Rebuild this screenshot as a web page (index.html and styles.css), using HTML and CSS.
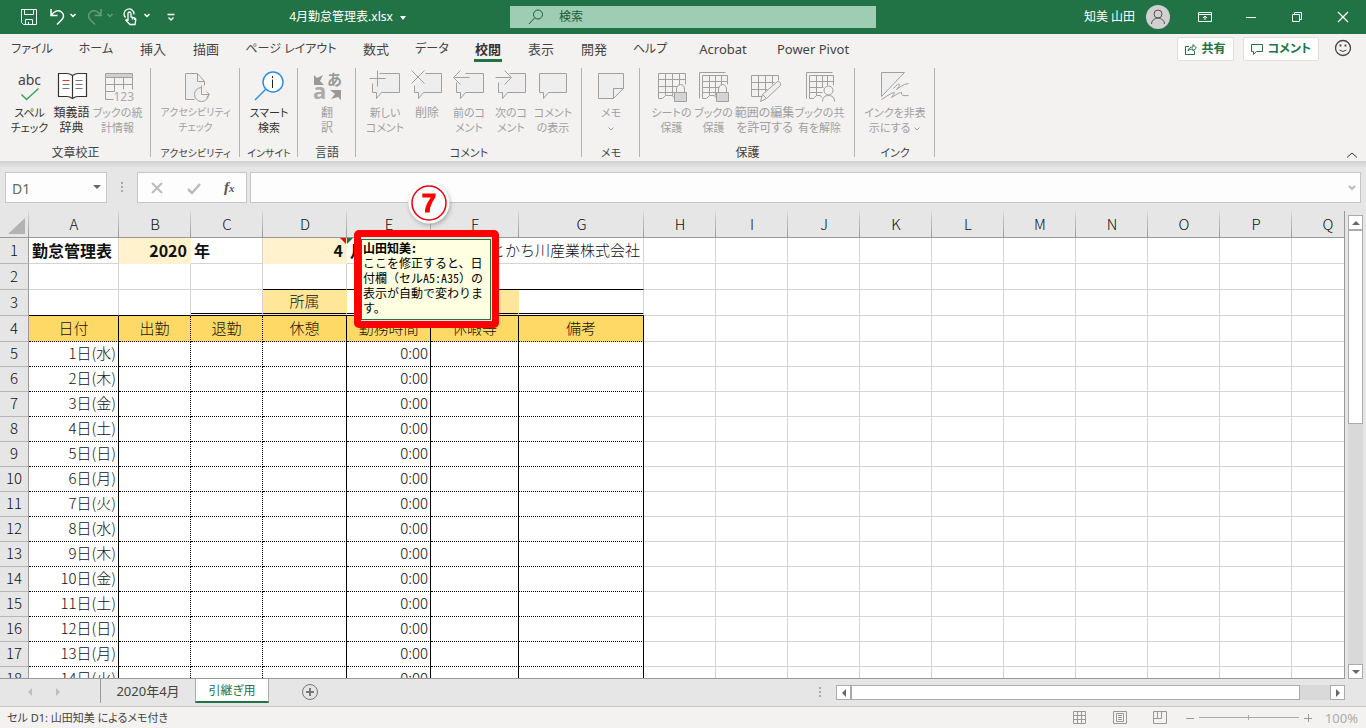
FILE: index.html
```html
<!DOCTYPE html>
<html lang="ja">
<head>
    <meta charset="UTF-8">
    <meta name="viewport" content="width=device-width, initial-scale=1.0">
    <title>4月勤怠管理表.xlsx</title>
    <link rel="stylesheet" href="styles.css">
</head>
<body>
    <header class="titlebar">
        <div class="title-left">
            <div class="qat">
                <button aria-label="上書き保存"><svg width="18" height="18" viewBox="0 0 18 18"><path d="M1.5 1.5h15v15h-13l-2-2zM4.500 1.500v5h9v-5M5.500 16.500v-5h7v5M8.500 16v-2"/></svg></button>
                <button aria-label="元に戻す"><svg width="28" height="18" viewBox="0 0 28 18"><path d="M2 1v6.500h6.500M2 7.500C5 3 9 1.500 12.500 4c3.500 3 2 6-.5 8.500l-4 4" stroke-width="1.500"/><path d="M21.500 6l2.500 2.500L26.500 6" stroke-width="1.500"/></svg></button>
                <button aria-label="やり直し" class="dim"><svg width="28" height="18" viewBox="0 0 28 18"><path d="M15 1v6.500H8.500M15 7.500C12 3 8 1.500 4.500 4c-3.500 3-2 6 .5 8.500l4 4" stroke-width="1.500"/><path d="M21.500 6L24 8.500 26.500 6" stroke-width="1.500"/></svg></button>
                <button aria-label="タッチ/マウス"><svg width="28" height="18" viewBox="0 0 28 18"><path d="M2.500 9.500A5 5 0 1 1 11 6.500M5 13V5.500a1.500 1.500 0 0 1 3 0V9l3.500.800q1.500.300 1.300 2l-.800 4.700H7L3 12.500q-.500-1.500 2 0M9.500 9v2.500M11.500 10v2" stroke-width="1.300"/><path d="M21.500 6L24 8.500 26.500 6" stroke-width="1.500"/></svg></button>
                <button class="customize" aria-label="クイック アクセス ツール バーのユーザー設定"><svg width="10" height="18" viewBox="0 0 10 18"><path d="M1.500 6.500h7M2.500 9.500L5 12l2.500-2.500" stroke-width="1.300"/></svg></button>
            </div>
            <button class="doc-title">4月勤怠管理表.xlsx <span class="caret"></span></button>
        </div>
        <label class="search">
            <svg width="16" height="16" viewBox="0 0 16 16"><circle cx="10" cy="5.500" r="4.500"/><path d="M6.500 9L1 15"/></svg>
            <input type="text" placeholder="検索" aria-label="検索">
        </label>
        <div class="title-right">
            <span class="user">知美 山田</span>
            <svg class="avatar" width="24" height="24" viewBox="0 0 24 24"><circle cx="12" cy="12" r="12" fill="#d0d0d0" stroke="none"/><circle cx="12" cy="9" r="4"/><path d="M5.500 19a6.500 6 0 0 1 13 0"/></svg>
            <button class="win" aria-label="リボンの表示オプション"><svg width="14" height="12" viewBox="0 0 14 12"><path d="M.5 1.500h13v9H.5zM.5 3.500h13M7 9V5M5 7l2-2 2 2"/></svg></button>
            <button class="win" aria-label="最小化"><svg width="12" height="12" viewBox="0 0 12 12"><path d="M1 6.500h10"/></svg></button>
            <button class="win" aria-label="元に戻す"><svg width="12" height="12" viewBox="0 0 12 12"><path d="M1.500 3.500h7v7h-7zM3.500 3.500v-2h7v7h-2"/></svg></button>
            <button class="win" aria-label="閉じる"><svg width="12" height="12" viewBox="0 0 12 12"><path d="M1 1l10 10M11 1L1 11" stroke-width="1.300"/></svg></button>
        </div>
    </header>

    <nav class="tabs">
        <button class="w64 kana">ファイル</button>
        <button class="w64 kana">ホーム</button>
        <button class="w50">挿入</button>
        <button class="w56">描画</button>
        <button class="w114 kana">ページ レイアウト</button>
        <button class="w56">数式</button>
        <button class="w56 kana">データ</button>
        <button class="w56 active">校閲</button>
        <button class="w50">表示</button>
        <button class="w56">開発</button>
        <button class="w56 kana">ヘルプ</button>
        <button class="w90">Acrobat</button>
        <button class="w90">Power Pivot</button>
        <div class="tab-actions">
            <button class="pill"><svg width="12" height="12" viewBox="0 0 12 12"><path d="M4 3.500H.5v8h9V8M3 8c.500-3 2.500-4 5-4V1.500L11.500 5 8 8V6C6 6 4 6.500 3 8z"/></svg>共有</button>
            <button class="pill"><svg width="12" height="12" viewBox="0 0 12 12"><path d="M.5 1.500h11v7h-6l-3 3v-3h-2z"/></svg>コメント</button>
            <button class="smile" aria-label="フィードバック"><svg width="18" height="18" viewBox="0 0 18 18"><circle cx="9" cy="9" r="7.500" stroke-width="1.300"/><path d="M6.500 5.500v2M11.500 5.500v2" stroke-width="1.800"/><path d="M5.500 11q3.500 3 7 0"/></svg></button>
        </div>
    </nav>

    <section class="ribbon">
        <div class="group g151">
            <div class="tools">
                <button class="w42 kana"><svg width="32" height="32" viewBox="-.5 -.5 32 32"><text x="15" y="14" text-anchor="middle" class="abc">abc</text><path d="M7 24l5 5L24 18" stroke="#3fa55c" stroke-width="1.500"/></svg>スペル<br>チェック</button>
                <button class="w42"><svg width="32" height="32" viewBox="-.5 -.5 32 32"><path d="M16 5q-3-2-5.500-2H2v23h8.500q3 0 5.500 2 2.500-2 5.500-2H30V3h-8.500Q19 3 16 5zM16 5v22" fill="#fff" stroke-width="1.200"/><path d="M6 10h7" stroke="#e33"/><path d="M6 14h7M6 18h7M19 10h7M19 14h7M19 18h7" stroke="#777"/></svg>類義語<br>辞典</button>
                <button class="w50 kana" disabled><svg width="32" height="32" viewBox="-.5 -.5 32 32"><path d="M3 3h27v4H3z" fill="#d0d0d0"/><path d="M3 7v22h8M30 7v12M3 14h27M3 21h9M12 7v14M21 7v12"/><text x="11" y="30" class="num">123</text></svg>ブックの統<br>計情報</button>
            </div>
            <div class="caption">文章校正</div>
        </div>
        <div class="group g89">
            <div class="tools">
                <button class="w72 narrow" disabled><svg width="32" height="32" viewBox="-.5 -.5 32 32"><path d="M14 29H5V3h12l7 8v4M17 3v8h7" fill="#eee"/><path d="M21 17a7 7 0 1 0 7 7M21 15v9h8M26 21l3 3-3 3"/></svg>アクセシビリティ<br>チェック</button>
            </div>
            <div class="caption narrow">アクセシビリティ</div>
        </div>
        <div class="group g58">
            <div class="tools">
                <button class="w50 kana"><svg width="32" height="32" viewBox="0 0 32 32"><circle cx="20" cy="12" r="10" fill="#fff" stroke="#2d8fdd" stroke-width="1.500"/><path d="M12.500 19.500L2 30" stroke="#2d8fdd" stroke-width="1.500"/><path d="M19.500 9.500V18M19.500 6v2" stroke="#222"/></svg>スマート<br>検索</button>
            </div>
            <div class="caption narrow">インサイト</div>
        </div>
        <div class="group g58">
            <div class="tools">
                <button class="w50" disabled><svg width="32" height="32" viewBox="0 0 32 32"><path d="M3 5l3 3 6-3-3 6 4 4H3z" fill="#999" stroke="none"/><path d="M30 30l-3-3-7 2 4-5-5-4h11z" fill="#999" stroke="none"/><text x="2" y="29" class="glyph">a</text><text x="16" y="15" class="hira">あ</text></svg>翻<br>訳</button>
            </div>
            <div class="caption">言語</div>
        </div>
        <div class="group g226">
            <div class="tools">
                <button class="w42 kana" disabled><svg width="32" height="32" viewBox="-.5 -.5 32 32"><path d="M10 3h20v19H12l-5 6v-6H3v-9" fill="#eee"/><path d="M8 0v16M0 8h16"/></svg>新しい<br>コメント</button>
                <button class="w42" disabled><svg width="32" height="32" viewBox="-.5 -.5 32 32"><path d="M14 3h16v19H12l-5 6v-6H3v-7" fill="#eee"/><path d="M0 0l13 13M13 0L0 13"/></svg>削除</button>
                <button class="w42 kana" disabled><svg width="32" height="32" viewBox="-.5 -.5 32 32"><path d="M12 3h18v19H12l-5 6v-6H3V12" fill="#eee"/><path d="M16 7H1M7 0L0 7l7 7"/></svg>前のコ<br>メント</button>
                <button class="w42 kana" disabled><svg width="32" height="32" viewBox="-.5 -.5 32 32"><path d="M14 3h16v19H12l-5 6v-6H3V12" fill="#eee"/><path d="M0 7h15M9 0l7 7-7 7"/></svg>次のコ<br>メント</button>
                <button class="w42 kana" disabled><svg width="32" height="32" viewBox="-.5 -.5 32 32"><path d="M2 3h27v19H11l-5 6v-6H2z" fill="#eee"/></svg>コメント<br>の表示</button>
            </div>
            <div class="caption kana">コメント</div>
        </div>
        <div class="group g58">
            <div class="tools">
                <button class="w50 kana" disabled><svg width="32" height="32" viewBox="-.5 -.5 32 32"><path d="M3 3h25v15L18 28H3zM18 28V18h10" fill="#eee"/></svg>メモ<br><svg class="chev" width="8" height="6" viewBox="0 0 8 6"><path d="M1.500 1.500L4 4l2.500-2.500"/></svg></button>
            </div>
            <div class="caption kana">メモ</div>
        </div>
        <div class="group g215">
            <div class="tools">
                <button class="w42 kana" disabled><svg width="32" height="32" viewBox="-.5 -.5 32 32"><path d="M17 27l-1-2H9l-3 3H2V3h27v11M2 9h27M2 16h19M2 22h16M9 3v22M16 3v22M23 3v12"/><path d="M20 22v-3.500a4 4.500 0 0 1 8 0V22"/><path d="M18 22h12v9H18z" fill="#d4d4d4"/></svg>シートの<br>保護</button>
                <button class="w42 kana" disabled><svg width="32" height="32" viewBox="-.5 -.5 32 32"><path d="M1 28V2h26M17 27l-1-2h-5l-3 3H4V5h25v9M4 11h25M4 17h17M4 22h14M11 5v20M17 5v20M23 5v10"/><path d="M20 22v-3.500a4 4.500 0 0 1 8 0V22"/><path d="M18 22h12v9H18z" fill="#d4d4d4"/></svg>ブックの<br>保護</button>
                <button class="w60" disabled><svg width="32" height="32" viewBox="-.5 -.5 32 32"><path d="M13 26H2V5h27v5M2 12h23M2 19h16M9 5v21M16 5v16M23 5v9"/><path d="M11 31l2-7 15-13q4 0 3 4L17 28zM13 24l4 4" fill="#eee"/></svg>範囲の編集<br>を許可する</button>
                <button class="w50 kana" disabled><svg width="32" height="32" viewBox="-.5 -.5 32 32"><path d="M2 28V2h26M17 27l-1-2h-4l-3 3H5V5h24v10M5 11h24M5 17h14M5 22h13M12 5v20M18 5v12M23 5v10"/><circle cx="24" cy="20" r="4.500" fill="#f3f2f1"/><path d="M18 31q0-6 6-6t6 6" fill="#f3f2f1"/></svg>ブックの共<br>有を解除</button>
            </div>
            <div class="caption">保護</div>
        </div>
        <div class="group g80">
            <div class="tools">
                <button class="w64 kana" disabled><svg width="32" height="32" viewBox="-.5 -.5 32 32"><path d="M2 26V2h23z" fill="#eee"/><path d="M14 18q5-6 6-4 0 2-3 5 4-3 8-5l4-1M2 29Q14 21 15 22q0 1-3 5 9-6 10-5-1 4 7 3"/></svg>インクを非表<br>示にする <svg class="chev" width="8" height="6" viewBox="0 0 8 6"><path d="M1.500 1.500L4 4l2.500-2.500"/></svg></button>
            </div>
            <div class="caption kana">インク</div>
        </div>
        <button class="collapse" aria-label="リボンを折りたたむ"><svg width="12" height="8" viewBox="0 0 12 8"><path d="M1 6.500L6 2l5 4.500"/></svg></button>
    </section>

    <section class="formula-bar">
        <div class="name-box"><input type="text" value="D1" aria-label="名前ボックス"><span class="caret"></span></div>
        <span class="dots"></span>
        <div class="fx-box">
            <button aria-label="キャンセル"><svg width="14" height="14" viewBox="0 0 14 14"><path d="M2 2l10 10M12 2L2 12"/></svg></button>
            <button aria-label="入力"><svg width="14" height="14" viewBox="0 0 14 14"><path d="M1 8l4 4L13 3" stroke-width="2.500"/></svg></button>
            <button class="fx" aria-label="関数の挿入">f<sub>x</sub></button>
        </div>
        <div class="formula"><input type="text" aria-label="数式バー"><svg width="8" height="8" viewBox="0 0 8 8"><path d="M1 2l3 3 3-3" stroke-width="2"/></svg></div>
    </section>

    <main class="workspace">
        <div class="sheet">
            <table>
                <colgroup id="cols"></colgroup>
                <thead><tr id="letters"></tr></thead>
                <tbody id="rows"></tbody>
            </table>
        </div>
        <div class="vscroll">
            <button class="step" aria-label="上へ"><span class="tri up"></span></button>
            <div class="vthumb"></div>
            <button class="step end" aria-label="下へ"><span class="tri down"></span></button>
        </div>

        <div class="memo-frame">
            <div class="memo"><b>山田知美<span class="half">:</span></b><br>ここを修正すると、日<br>付欄（セル<span class="half">A5:A35</span>）の<br>表示が自動で変わりま<br>す。</div>
        </div>
        <svg class="step-badge" width="46" height="46" viewBox="0 0 46 46">
            <circle cx="23" cy="23" r="20.500" fill="#fff" stroke="none"/>
            <circle cx="23" cy="23" r="17" fill="none" stroke="#e60012" stroke-width="1.500"/>
            <text x="23" y="32" text-anchor="middle">7</text>
        </svg>
    </main>

    <section class="sheet-tabs">
        <button class="nav" aria-label="前のシート"><span class="tri left"></span></button>
        <button class="nav" aria-label="次のシート"><span class="tri right"></span></button>
        <button class="sheet-tab">2020年4月</button>
        <button class="sheet-tab current">引継ぎ用</button>
        <button class="add" aria-label="新しいシート"><svg width="18" height="18" viewBox="0 0 18 18"><circle cx="9" cy="9" r="7.500"/><path d="M9 5v8M5 9h8" stroke-width="2"/></svg></button>
        <span class="dots"></span>
        <div class="hscroll">
            <button class="step" aria-label="左へ"><span class="tri left"></span></button>
            <div class="hthumb"></div>
            <button class="step end" aria-label="右へ"><span class="tri right"></span></button>
        </div>
    </section>

    <footer class="status">
        <span class="message">セル D1: 山田知美 によるメモ付き</span>
        <div class="views">
            <button aria-label="標準"><svg width="14" height="14" viewBox="0 0 14 14"><path d="M.5.5h12v12H.5zM.5 4.500h12M.5 8.500h12M4.500.5v12M8.500.5v12"/></svg></button>
            <button aria-label="ページ レイアウト"><svg width="14" height="14" viewBox="0 0 14 14"><path d="M.5.5h13v12H.5zM3.500 2.500h7v8h-7zM5 4.500h4M5 6.500h4M5 8.500h4"/></svg></button>
            <button aria-label="改ページ プレビュー"><svg width="14" height="14" viewBox="0 0 14 14"><path d="M.5.5h13v12H.5zM.5 7.500h8v-7M4.500.5v7"/></svg></button>
            <div class="zoom">
                <button aria-label="縮小"><svg width="10" height="10" viewBox="0 0 10 10"><path d="M1 5.500h8"/></svg></button>
                <span class="rail"></span>
                <button aria-label="拡大"><svg width="10" height="10" viewBox="0 0 10 10"><path d="M1 5.500h8M5.500 1v8"/></svg></button>
            </div>
            <span class="percent">100%</span>
        </div>
    </footer>

    <script src="script.js"></script>
</body>
</html>
```

FILE: styles.css
```css
* {
    box-sizing: border-box;
}
body {
    margin: 0;
    height: 100vh;
    display: flex;
    flex-direction: column;
    overflow: hidden;
    background: #e6e6e6;
    color: #333;
    font-family: "Noto Sans", "Noto Sans CJK JP", sans-serif;
    font-size: 12px;
    line-height: 16px;
    font-feature-settings: "palt";
}
button, input {
    font: inherit;
    font-feature-settings: inherit;
    color: inherit;
    background: none;
    border: none;
    padding: 0;
    margin: 0;
    min-width: 0;
    outline: none;
}
svg {
    fill: none;
    stroke: currentColor;
    flex: none;
    overflow: visible;
}
.caret {
    display: inline-block;
    border: 3px solid transparent;
    border-top: 4px solid currentColor;
    border-bottom: none;
    vertical-align: middle;
}
.dots {
    flex: none;
    width: 2px;
    height: 11px;
    background: repeating-linear-gradient(#aaa 0 2px, transparent 2px 4px);
}

/* title bar */
.titlebar {
    flex: none;
    height: 34px;
    display: flex;
    background: #217346;
    color: #fff;
}
.title-left, .title-right {
    flex: 1 1 0;
    display: flex;
    align-items: center;
}
.title-left {
    justify-content: space-between;
}
.qat {
    display: flex;
    gap: 9px;
    margin-left: 20px;
}
.qat button {
    display: flex;
}
.qat button:first-child {
    margin-right: 2px;
}
.qat .customize {
    margin-left: 6px;
}
.dim {
    opacity: .3;
}
.doc-title {
    margin-right: 84px;
}
.doc-title .caret {
    margin-left: 4px;
}
.search {
    width: 366px;
    height: 22px;
    margin: 6px 0 6px 20px;
    padding-left: 18px;
    display: flex;
    align-items: center;
    gap: 15px;
    background: #9fcdb3;
    color: #185c37;
}
.search input::placeholder {
    color: #185c37;
    opacity: 1;
}
.title-right {
    justify-content: flex-end;
}
.avatar {
    margin: 0 12px 0 11px;
    color: #555;
}
.win {
    width: 46px;
    height: 34px;
    display: flex;
    align-items: center;
    justify-content: center;
}

/* ribbon tabs */
.tabs {
    flex: none;
    height: 32px;
    display: flex;
    background: #f3f2f1;
    color: #444;
    font-size: 13px;
}
.tabs > button {
    position: relative;
    height: 30px;
    white-space: nowrap;
}
.tabs .kana {
    font-size: 12px;
}
.tabs .active {
    font-weight: bold;
    color: #333;
}
.tabs .active::after {
    content: "";
    position: absolute;
    left: 14px;
    right: 14px;
    bottom: 2px;
    height: 3px;
    background: #217346;
}
.tab-actions {
    margin-left: auto;
    padding: 3px 14px 0 0;
    display: flex;
    align-items: flex-start;
    gap: 9px;
}
.pill {
    height: 24px;
    padding: 0 7px;
    display: flex;
    align-items: center;
    gap: 5px;
    background: #fff;
    border: 1px solid #e1dfdd;
    border-radius: 2px;
    color: #217346;
    font-size: 12px;
    font-weight: bold;
}
.smile {
    width: 18px;
    height: 22px;
    margin-left: 6px;
    display: flex;
    align-items: center;
}
.w42 { width: 42px; }
.w50 { width: 50px; }
.w56 { width: 56px; }
.w60 { width: 60px; }
.w64 { width: 64px; }
.w72 { width: 72px; }
.w90 { width: 90px; }
.w114 { width: 114px; }

/* ribbon */
.ribbon {
    flex: none;
    height: 95px;
    display: flex;
    background: #f3f2f1;
    position: relative;
}
.group {
    height: 93px;
    margin-top: 2px;
    display: flex;
    flex-direction: column;
    align-items: center;
    justify-content: space-between;
    position: relative;
}
.group::after {
    content: "";
    position: absolute;
    right: 0;
    top: 0;
    height: 89px;
    border-right: 1px solid #b3b3b3;
}
.g58 { width: 58px; }
.g80 { width: 80px; }
.g89 { width: 89px; }
.g151 { width: 151px; }
.g215 { width: 215px; }
.g226 { width: 226px; }
.tools {
    display: flex;
    align-items: flex-start;
}
.tools button {
    display: flow-root;
    padding-top: 2px;
    line-height: 15px;
    white-space: nowrap;
    text-align: center;
}
.tools button > svg:first-child {
    display: block;
    margin: 0 auto 3px;
}
.tools button:disabled {
    color: #a0a0a0;
}
.caption {
    color: #444;
    white-space: nowrap;
    line-height: 16px;
}
/* kana runs wide at full size */
.ribbon .kana {
    font-size: 11px;
}
.ribbon .narrow {
    font-size: 10px;
}
.abc {
    font-size: 14px;
    fill: #444;
    stroke: none;
}
.num {
    font-size: 12px;
    fill: #aaa;
    stroke: none;
}
.glyph {
    font-size: 22px;
    font-weight: bold;
    fill: #aaa;
    stroke: none;
}
.hira {
    font-size: 15px;
    font-weight: bold;
    fill: #999;
    stroke: none;
}
.collapse {
    margin: auto 8px 2px auto;
    display: flex;
}

/* formula bar */
.formula-bar {
    flex: none;
    height: 50px;
    padding: 11px 5px 8px;
    display: flex;
    background: linear-gradient(#cfcfcf, #e6e6e6 7px);
}
.name-box, .fx-box, .formula {
    display: flex;
    align-items: center;
    background: #fdfdfd;
    border: 1px solid #c6c6c6;
}
.name-box {
    width: 102px;
    padding: 3px 5px 0 6px;
    color: #666;
    font-size: 14px;
}
.name-box input {
    flex: 1;
}
.name-box .caret {
    border-width: 4px 4px 0;
    margin-bottom: 4px;
}
.formula-bar .dots {
    margin: 10px 14px 0;
}
.fx-box {
    width: 110px;
    justify-content: space-around;
    color: #bbb;
    margin-right: 3px;
}
.fx-box button {
    display: flex;
}
.fx-box svg {
    stroke-width: 2;
}
.fx-box .fx {
    color: #555;
    font: italic bold 15px/18px "Liberation Serif", serif;
}
.fx sub {
    font-size: 11px;
    line-height: 20px;
}
.formula {
    flex: 1;
    padding: 0 4px;
    color: #bbb;
}
.formula input {
    flex: 1;
}

/* sheet */
.workspace {
    flex: 1;
    min-height: 0;
    display: flex;
    position: relative;
}
.sheet {
    flex: 1;
    min-width: 0;
    overflow: hidden;
    border-right: 1px solid #999;
    border-bottom: 1px solid #999;
}
table {
    width: 1364px;
    table-layout: fixed;
    border-collapse: separate;
    border-spacing: 0;
    background: #fff;
    color: #111;
    font-family: "Noto Sans CJK JP", sans-serif;
    font-feature-settings: normal;
    font-size: 15px;
    font-weight: 300;
    line-height: 20px;
}
th, td {
    height: 25px;
    padding: 0 2px 2px;
    border-right: 1px solid #d4d4d4;
    border-bottom: 1px solid #d4d4d4;
    text-align: center;
    white-space: nowrap;
    font-weight: inherit;
}
thead th {
    height: 27px;
    padding-bottom: 0;
    background: linear-gradient(#d8d8d8, #999) right / 1px 100% no-repeat #e6e6e6;
    border-right: none;
    border-bottom-color: #999;
}
tbody th {
    background: #e6e6e6;
    border-right-color: #999;
    border-bottom-color: #b5b5b5;
}
.corner {
    padding: 0;
}
.corner::after {
    content: "";
    display: block;
    width: 0;
    margin: 4px 0 0 8px;
    border-left: 17px solid transparent;
    border-bottom: 16px solid #b3b3b3;
}
.tall th, .tall td {
    height: 26px;
}
.title-row td {
    position: relative;
    font-size: 16px;
    font-weight: bold;
    text-align: left;
    padding: 0 3px 2px;
}
.title-row .value {
    text-align: right;
    background: #fff2cc;
    border-right-color: #fff2cc;
    border-bottom-color: #fff2cc;
}
.title-row .company {
    text-align: right;
    font-size: 15px;
    font-weight: 300;
}
/* corner marks: red for a memo, green for a cell warning */
.noted::after, .warned::before {
    content: "";
    position: absolute;
    top: 0;
    border-top: 6px solid #f00;
}
.noted::after {
    right: 0;
    border-left: 6px solid transparent;
}
.warned::before {
    left: 0;
    border-top-color: #217346;
    border-right: 6px solid transparent;
}
.line {
    border-bottom-color: #000;
}
.double {
    border-bottom: 3px double #000;
}
.label {
    background: #ffe699;
    border-right-color: #ffe699;
}
.head {
    background: #ffd966;
}
.body {
    border-right: 1px solid #000;
    border-bottom: 1px dotted #000;
}
.thin {
    border-right-style: dotted;
}
td.right {
    text-align: right;
}

.memo-frame {
    position: absolute;
    left: 354px;
    top: 19px;
    width: 145px;
    height: 98px;
    padding: 2px 1px 1px 0;
    border: 7px solid #f00;
    border-radius: 5px;
    background: #e6e6e6;
}
.memo {
    height: 100%;
    padding: 0 2px 0 1px;
    background: #ffffe1;
    border: 1px solid #217346;
    color: #000;
    font-family: "Noto Sans CJK JP", sans-serif;
    font-feature-settings: normal;
    font-size: 12px;
    line-height: 15px;
    white-space: nowrap;
}
.half {
    font-feature-settings: "hwid";
}
.step-badge {
    position: absolute;
    left: 406px;
    top: -31px;
    filter: drop-shadow(1px 2px 2px rgba(0,0,0,.25));
}
.step-badge text {
    font-family: "Liberation Sans", sans-serif;
    font-size: 26px;
    font-weight: bold;
    fill: #f00;
    stroke: #f00;
}

/* scroll bars */
.vscroll {
    flex: none;
    width: 21px;
    padding: 4px 3px 0;
    display: flex;
    flex-direction: column;
    background: linear-gradient(#d9d9d9, #d9d9d9) 3px 4px / 15px 100% no-repeat;
}
.step {
    flex: none;
    width: 15px;
    height: 15px;
    display: flex;
    align-items: center;
    justify-content: center;
    background: #fff;
    border: 1px solid #ababab;
}
.vthumb, .hthumb {
    background: #fff;
    border: 1px solid #ababab;
}
.vthumb {
    height: 194px;
}
.vscroll .end {
    margin-top: auto;
}
.tri {
    border: 4px solid transparent;
}
.up {
    border-bottom-color: #666;
    border-top: none;
}
.down {
    border-top-color: #666;
    border-bottom: none;
}
.tri.left {
    border-right-color: #666;
    border-left: none;
}
.tri.right {
    border-left-color: #666;
    border-right: none;
}

/* sheet tabs */
.sheet-tabs {
    flex: none;
    height: 27px;
    padding: 0 21px 0 16px;
    display: flex;
    align-items: flex-start;
}
.nav {
    width: 28px;
    height: 26px;
    display: flex;
    align-items: center;
    justify-content: center;
    opacity: .3;
}
.sheet-tab {
    height: 24px;
    font-size: 13px;
    color: #444;
}
.sheet-tab:not(.current) {
    width: 95px;
    margin-left: 28px;
    border-left: 1px solid #999;
}
.current {
    width: 74px;
    padding-top: 2px;
    background: #fff;
    border: 1px solid #ababab;
    border-top: none;
    border-bottom: 2px solid #217346;
    color: #217346;
    font-size: 12px;
}
.add {
    margin: 4px 0 0 32px;
    display: flex;
    color: #777;
}
.sheet-tabs .dots {
    margin: 8px 15px 0 auto;
}
.hscroll {
    width: 509px;
    margin-top: 6px;
    display: flex;
    background: #d9d9d9;
}
.hthumb {
    width: 449px;
}
.hscroll .end {
    margin-left: auto;
}

/* status bar */
.status {
    flex: none;
    height: 22px;
    padding: 0 8px 0 7px;
    display: flex;
    align-items: center;
    justify-content: space-between;
    background: #f3f2f1;
    border-top: 1px solid #c6c6c6;
    color: #444;
}
.message {
    font-size: 11px;
}
.views {
    display: flex;
    align-items: center;
    gap: 26px;
    color: #999;
}
.views button {
    display: flex;
}
.zoom {
    display: flex;
    align-items: center;
    gap: 4px;
    margin-left: -8px;
}
.rail {
    width: 100px;
    height: 5px;
    background:
        linear-gradient(#aaa, #aaa) center / 1px 5px no-repeat,
        linear-gradient(#aaa, #aaa) center / 100% 1px no-repeat;
}
.percent {
    margin-left: -14px;
    color: #aaa;
    font-size: 13px;
}
```

FILE: script.js
```js
const widths = [29, 90, 72, 72, 84, 84, 88, 125, 72, 72, 72, 72, 72, 72, 72, 72, 72, 72];
const letters = "ABCDEFGHIJKLMNOPQ".split("");
const heads = ["日付", "出勤", "退勤", "休憩", "勤務時間", "休暇等", "備考"];
const days = ["火", "水", "木", "金", "土", "日", "月"];

document.getElementById("cols").innerHTML = widths.map(w => `<col style="width:${w}px">`).join("");
document.getElementById("letters").innerHTML =
    `<th class="corner"></th>` + letters.map(l => `<th>${l}</th>`).join("");

const blank = n => "<td></td>".repeat(n);
const row = (n, cells, cls = "") => `<tr class="${cls}"><th>${n}</th>${cells}${blank(10)}</tr>`;

let html = row(1, `<td>勤怠管理表</td><td class="value">2020</td><td>年</td><td class="value noted">4</td><td class="warned">月</td><td colspan="2" class="company">とかち川産業株式会社</td>`, "tall title-row");
html += row(2, blank(3) + `<td class="line"></td><td class="line"></td><td colspan="2" class="line"></td>`, "tall");
html += row(3, `<td class="line"></td><td class="line"></td><td class="double"></td>
    <td class="double label">所属</td><td class="double"></td><td class="double label"></td><td class="double"></td>`, "tall");

// B and C have dotted right edges
const thin = i => (i === 1 || i === 2 ? " thin" : "");
html += row(4, heads.map((h, i) => `<td class="head body${thin(i)}">${h}</td>`).join(""), "tall");

for (let d = 1; d <= 14; d++) {
    const values = [`${d}日(${days[d % 7]})`, "", "", "", "0:00", "", ""];
    html += row(d + 4, values.map((v, i) => `<td class="body right${thin(i)}">${v}</td>`).join(""));
}
document.getElementById("rows").innerHTML = html;
```
